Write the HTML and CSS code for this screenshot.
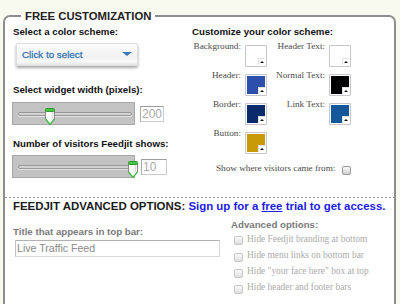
FILE: index.html
```html
<!DOCTYPE html>
<html>
<head>
<meta charset="utf-8">
<title>Feedjit customization</title>
<link rel="stylesheet" href="styles.css">
</head>
<body>
<fieldset class="panel">
  <legend class="panel-title">FREE CUSTOMIZATION</legend>
  <div class="top">
    <div class="col-left">
      <div class="heading">Select a color scheme:</div>
      <div class="dropdown"><span>Click to select</span><span class="caret"></span></div>
      <div class="heading h-width">Select widget width (pixels):</div>
      <div class="slider-row">
        <div class="slider">
          <div class="track"></div>
          <svg class="thumb" style="left:32px" viewBox="0 0 10 17" width="10" height="17">
            <path d="M0.5 2.5 V11 L5 16.5 L9.5 11 V2.5 Z" fill="#fff" stroke="#8a8a8a"/>
            <path d="M7.5 3 V11.5" stroke="#dcdcdc" stroke-width="1.5"/>
            <path d="M0.6 11 L5 16.4 L9.4 11" fill="none" stroke="#3cbf3c" stroke-width="1.2"/>
            <rect x="0.5" y="0.5" width="9" height="3" rx="1" fill="#46c846" stroke="#2f9a2f"/>
          </svg>
        </div>
        <div class="value w24">200</div>
      </div>
      <div class="heading h-visitors">Number of visitors Feedjit shows:</div>
      <div class="slider-row second">
        <div class="slider">
          <div class="track"></div>
          <svg class="thumb" style="left:115px" viewBox="0 0 10 17" width="10" height="17">
            <path d="M0.5 2.5 V11 L5 16.5 L9.5 11 V2.5 Z" fill="#fff" stroke="#8a8a8a"/>
            <path d="M7.5 3 V11.5" stroke="#dcdcdc" stroke-width="1.5"/>
            <path d="M0.6 11 L5 16.4 L9.4 11" fill="none" stroke="#3cbf3c" stroke-width="1.2"/>
            <rect x="0.5" y="0.5" width="9" height="3" rx="1" fill="#46c846" stroke="#2f9a2f"/>
          </svg>
        </div>
        <div class="value w26">10</div>
      </div>
    </div>
    <div class="col-right">
      <div class="heading">Customize your color scheme:</div>
      <div class="colors">
        <span class="clabel">Background:</span>
        <span class="swatch"><i class="fill" style="background:#ffffff"><b class="corner"></b></i></span>
        <span class="clabel">Header Text:</span>
        <span class="swatch"><i class="fill" style="background:#ffffff"><b class="corner"></b></i></span>
        <span class="clabel">Header:</span>
        <span class="swatch"><i class="fill" style="background:#2c4fab"><b class="corner"></b></i></span>
        <span class="clabel">Normal Text:</span>
        <span class="swatch"><i class="fill" style="background:#000000"><b class="corner"></b></i></span>
        <span class="clabel">Border:</span>
        <span class="swatch"><i class="fill" style="background:#0b2a6c"><b class="corner"></b></i></span>
        <span class="clabel">Link Text:</span>
        <span class="swatch"><i class="fill" style="background:#14579b"><b class="corner"></b></i></span>
        <span class="clabel">Button:</span>
        <span class="swatch"><i class="fill" style="background:#c99a08"><b class="corner"></b></i></span>
      </div>
      <div class="show-from"><span>Show where visitors came from:</span><span class="check"></span></div>
    </div>
  </div>
  <div class="divider"></div>
  <div class="adv-title">FEEDJIT ADVANCED OPTIONS: <a class="signup">Sign up for a <u>free</u> trial to get access.</a></div>
  <div class="adv">
    <div class="adv-left">
      <div class="heading gray title-label">Title that appears in top bar:</div>
      <div class="text-input">Live Traffic Feed</div>
    </div>
    <div class="adv-right">
      <div class="heading gray opts-label">Advanced options:</div>
      <ul class="opts">
        <li><span class="check dim"></span>Hide Feedjit branding at bottom</li>
        <li><span class="check dim"></span>Hide menu links on bottom bar</li>
        <li><span class="check dim"></span>Hide "your face here" box at top</li>
        <li><span class="check dim"></span>Hide header and footer bars</li>
      </ul>
    </div>
  </div>
</fieldset>
</body>
</html>
```
FILE: styles.css
```css
html, body {
  margin: 0;
  padding: 0;
  overflow: hidden;
}
body {
  background: #f8f9ef;
  font-family: "Liberation Sans", Arial, sans-serif;
  color: #111;
}
.panel {
  margin: 8px 4px 0 3px;
  padding: 0 8px;
  border: 2px solid #8e8e8e;
  border-radius: 7px;
  background: #fff;
  min-height: 330px;
  min-width: 0;
}
.panel-title {
  margin-left: 8px;
  padding: 2px 4px 0;
  font: bold 11.3px/13px "Liberation Sans", Arial, sans-serif;
  color: #222;
}
.heading {
  font: bold 9.7px/12px "Liberation Sans", Arial, sans-serif;
  color: #111;
  white-space: nowrap;
}
.heading.gray { color: #7a7a7a; }
.top {
  display: grid;
  grid-template-columns: 172px 1fr;
  column-gap: 7px;
  padding-top: 3px;
}
.dropdown {
  margin: 5px 0 0 3px;
  width: 122px;
  height: 23px;
  box-sizing: border-box;
  border: 1px solid #dedede;
  border-radius: 2px;
  background: linear-gradient(#fcfcfc, #f1f1f1 65%, #fbfbfb 82%, #e4e4e4);
  box-shadow: 0 2px 3px rgba(0,0,0,.35);
  display: flex;
  align-items: center;
  justify-content: space-between;
  padding: 0 5px 1px 5px;
  color: #3a78b4;
  font-size: 9.8px;
  -webkit-text-stroke: 0.3px #3a78b4;
}
.caret {
  width: 0;
  height: 0;
  border-left: 5px solid transparent;
  border-right: 5px solid transparent;
  border-top: 4px solid #3a78b4;
}
.h-width { margin-top: 18px; }
.h-visitors { margin-top: 13px; }
.slider-row {
  display: flex;
  align-items: center;
  gap: 5px;
  margin: 6px 0 0 -1px;
}
.slider-row.second { margin-top: 5px; gap: 6px; }
.slider {
  position: relative;
  width: 123px;
  height: 23px;
  box-sizing: border-box;
  border: 1px solid #a8a8a8;
  background: #c3c3c3;
}
.track {
  margin: 9px 2px 0 5px;
  height: 2px;
  border: 1px solid #9a9a9a;
  border-radius: 3px;
  background: #d2d2d2;
  box-shadow: 0 1px 0 #e2e2e2;
}
.thumb {
  position: absolute;
  top: 5px;
  display: block;
}
.value {
  box-sizing: border-box;
  height: 16px;
  border: 1px solid #cbcbcb;
  border-top-color: #9d9d9d;
  border-left-color: #ababab;
  background: #fff;
  color: #aaa;
  font-size: 12px;
  line-height: 14px;
  padding-left: 1px;
}
.w24 { width: 24px; }
.w26 { width: 26px; }
.colors {
  display: grid;
  grid-template-columns: 53px 22px 62px 22px;
  grid-auto-rows: 22px;
  row-gap: 7px;
  margin-top: 7px;
}
.clabel {
  font: 9.2px/11px "Liberation Serif", "Times New Roman", serif;
  color: #4a4a4a;
  text-align: right;
  padding-right: 4px;
  margin-top: -4px;
  white-space: nowrap;
}
.swatch {
  box-sizing: border-box;
  width: 22px;
  height: 22px;
  border: 1px solid #c6c6ce;
  border-radius: 1px;
  padding: 1px;
  background: #fff;
}
.fill {
  display: block;
  position: relative;
  width: 18px;
  height: 18px;
}
.corner {
  position: absolute;
  right: 0;
  bottom: 0;
  width: 7px;
  height: 7px;
  box-sizing: border-box;
  background: #fff;
  border-left: 1px solid #e2e2e2;
  border-top: 1px solid #e2e2e2;
}
.corner::after {
  content: "";
  position: absolute;
  left: 1px;
  top: 2px;
  width: 0;
  height: 0;
  border-left: 2px solid transparent;
  border-right: 2px solid transparent;
  border-bottom: 2px solid #111;
}
.show-from {
  display: flex;
  align-items: flex-start;
  gap: 7px;
  margin: 8px 0 0 24px;
  font: 9.2px/12px "Liberation Serif", "Times New Roman", serif;
  color: #4a4a4a;
  white-space: nowrap;
}
.check {
  flex: none;
  width: 9px;
  height: 9px;
  box-sizing: border-box;
  border: 1px solid #9a9a9a;
  border-radius: 2px;
  background: linear-gradient(#fdfdfd, #cdcdcd);
  margin-top: 4px;
}
.divider {
  margin: 19px -8px 0;
  height: 1px;
  background: repeating-linear-gradient(90deg, #9a9a9a 0 2px, transparent 2px 4px);
}
.adv-title {
  margin-top: 1px;
  font: bold 11.45px/14px "Liberation Sans", Arial, sans-serif;
  color: #1a1a1a;
  white-space: nowrap;
}
.signup {
  color: #1c1ce4;
  text-decoration: none;
}
.signup u { text-decoration: underline; }
.adv {
  display: grid;
  grid-template-columns: 209px 1fr;
  column-gap: 9px;
}
.title-label { margin-top: 12.6px; }
.text-input {
  margin: 2.4px 0 0 2px;
  width: 205px;
  height: 17px;
  box-sizing: border-box;
  border: 1px solid #d8d8d8;
  border-top-color: #b2b2b2;
  border-left-color: #c2c2c2;
  padding-left: 1px;
  font: 10.6px/15px "Liberation Sans", Arial, sans-serif;
  color: #8a8a8a;
}
.opts-label { margin-top: 5.6px; }
.opts {
  list-style: none;
  margin: 0 0 0 3px;
  padding: 0;
}
.opts li {
  display: flex;
  align-items: flex-start;
  gap: 4px;
  height: 16.3px;
  font: 9.4px/16.3px "Liberation Serif", "Times New Roman", serif;
  color: #ababab;
  white-space: nowrap;
}
.check.dim {
  margin-top: 5.8px;
  border-color: #c6c6c6;
  background: linear-gradient(#fbfbfb, #dedede);
}
```
